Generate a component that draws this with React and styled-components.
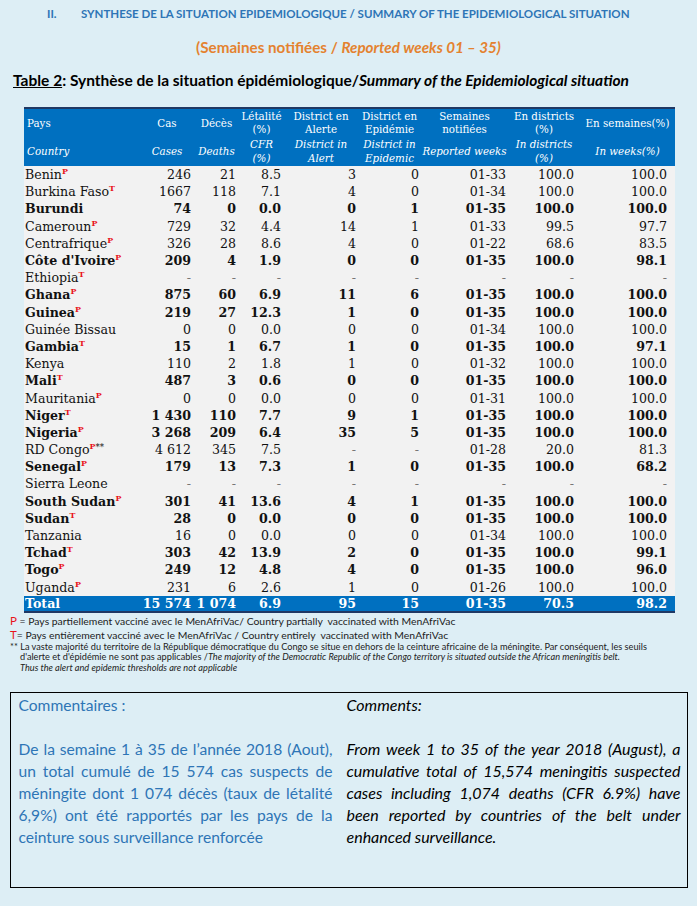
import React from 'react';
import styled, { createGlobalStyle } from 'styled-components';

const GlobalStyle = createGlobalStyle`
  body {
    margin: 0;
    background-color: #ddeef5;
    font-family: Lato, "Liberation Sans", sans-serif;
  }
`;

const columns = [
  { width: 116, pad: 0, align: 'left' },
  { width: 54, pad: 3 },
  { width: 45, pad: 3 },
  { width: 45, pad: 3 },
  { width: 74, pad: 2 },
  { width: 63, pad: 2 },
  { width: 87, pad: 2 },
  { width: 72, pad: 6 },
  { width: 95, pad: 8 },
];

const headers = [
  { fr: 'Pays', en: 'Country', align: 'left' },
  { fr: 'Cas', en: 'Cases' },
  { fr: 'Décès', en: 'Deaths' },
  { fr: <>Létalité<br />(%)</>, en: <>CFR<br />(%)</> },
  { fr: <>District en<br />Alerte</>, en: <>District in<br />Alert</> },
  { fr: <>District en<br />Epidémie</>, en: <>District in<br />Epidemic</> },
  { fr: <>Semaines<br />notifiées</>, en: 'Reported weeks' },
  { fr: <>En districts<br />(%)</>, en: <>In districts<br />(%)</> },
  { fr: 'En semaines(%)', en: 'In weeks(%)' },
];

const D = '-';
const rows = [
  ['Benin', 'P', false, '246', '21', '8.5', '3', '0', '01-33', '100.0', '100.0'],
  ['Burkina Faso', 'T', false, '1667', '118', '7.1', '4', '0', '01-34', '100.0', '100.0'],
  ['Burundi', '', true, '74', '0', '0.0', '0', '1', '01-35', '100.0', '100.0'],
  ['Cameroun', 'P', false, '729', '32', '4.4', '14', '1', '01-33', '99.5', '97.7'],
  ['Centrafrique', 'P', false, '326', '28', '8.6', '4', '0', '01-22', '68.6', '83.5'],
  ["Côte d'Ivoire", 'P', true, '209', '4', '1.9', '0', '0', '01-35', '100.0', '98.1'],
  ['Ethiopia', 'T', false, D, D, D, D, D, D, D, D],
  ['Ghana', 'P', true, '875', '60', '6.9', '11', '6', '01-35', '100.0', '100.0'],
  ['Guinea', 'P', true, '219', '27', '12.3', '1', '0', '01-35', '100.0', '100.0'],
  ['Guinée Bissau', '', false, '0', '0', '0.0', '0', '0', '01-34', '100.0', '100.0'],
  ['Gambia', 'T', true, '15', '1', '6.7', '1', '0', '01-35', '100.0', '97.1'],
  ['Kenya', '', false, '110', '2', '1.8', '1', '0', '01-32', '100.0', '100.0'],
  ['Mali', 'T', true, '487', '3', '0.6', '0', '0', '01-35', '100.0', '100.0'],
  ['Mauritania', 'P', false, '0', '0', '0.0', '0', '0', '01-31', '100.0', '100.0'],
  ['Niger', 'T', true, '1\u00a0430', '110', '7.7', '9', '1', '01-35', '100.0', '100.0'],
  ['Nigeria', 'P', true, '3\u00a0268', '209', '6.4', '35', '5', '01-35', '100.0', '100.0'],
  ['RD Congo', 'P', false, '4\u00a0612', '345', '7.5', D, D, '01-28', '20.0', '81.3', '**'],
  ['Senegal', 'P', true, '179', '13', '7.3', '1', '0', '01-35', '100.0', '68.2'],
  ['Sierra Leone', '', false, D, D, D, D, D, D, D, D],
  ['South Sudan', 'P', true, '301', '41', '13.6', '4', '1', '01-35', '100.0', '100.0'],
  ['Sudan', 'T', true, '28', '0', '0.0', '0', '0', '01-35', '100.0', '100.0'],
  ['Tanzania', '', false, '16', '0', '0.0', '0', '0', '01-34', '100.0', '100.0'],
  ['Tchad', 'T', true, '303', '42', '13.9', '2', '0', '01-35', '100.0', '99.1'],
  ['Togo', 'P', true, '249', '12', '4.8', '4', '0', '01-35', '100.0', '96.0'],
  ['Uganda', 'P', false, '231', '6', '2.6', '1', '0', '01-26', '100.0', '100.0'],
];

const totals = ['15\u00a0574', '1\u00a0074', '6.9', '95', '15', '01-35', '70.5', '98.2'];

export default function App() {
  return (
    <>
      <GlobalStyle />
      <Page>
        <SectionTitle>
          <SectionNumber>II.</SectionNumber>
          SYNTHESE DE LA SITUATION EPIDEMIOLOGIQUE / SUMMARY OF THE EPIDEMIOLOGICAL SITUATION
        </SectionTitle>

        <WeeksLine>
          (Semaines notifiées / <em>Reported weeks 01 – 35)</em>
        </WeeksLine>

        <Caption>
          <u>Table 2</u>: Synthèse de la situation épidémiologique/<em>Summary of the Epidemiological situation</em>
        </Caption>

        <DataTable>
          <colgroup>
            {columns.map((c, i) => (
              <col key={i} style={{ width: c.width }} />
            ))}
          </colgroup>
          <thead>
            <tr>
              {headers.map((h, i) => (
                <HeadCell key={i} $align={h.align}>
                  <HeadHalf $align={h.align}>{h.fr}</HeadHalf>
                  <HeadHalf $align={h.align} $italic>{h.en}</HeadHalf>
                </HeadCell>
              ))}
            </tr>
          </thead>
          <tbody>
            {rows.map((r) => {
              const [name, mark, bold, ...rest] = r;
              const values = rest.slice(0, 8);
              const extra = rest[8];
              return (
                <BodyRow key={name} $bold={bold}>
                  <NameCell>
                    {name}
                    {mark && <Mark>{mark}</Mark>}
                    {extra && <Stars>{extra}</Stars>}
                  </NameCell>
                  {values.map((v, i) => (
                    <NumCell key={i} $pad={columns[i + 1].pad} $dash={v === D}>
                      {v}
                    </NumCell>
                  ))}
                </BodyRow>
              );
            })}
            <TotalRow>
              <NameCell>Total</NameCell>
              {totals.map((v, i) => (
                <NumCell key={i} $pad={columns[i + 1].pad}>
                  {v}
                </NumCell>
              ))}
            </TotalRow>
          </tbody>
        </DataTable>

        <Notes>
          <NoteLine>
            <NoteKey>P</NoteKey> = Pays partiellement vacciné avec le MenAfriVac/ Country partially&nbsp; vaccinated with MenAfriVac
          </NoteLine>
          <NoteLine>
            <NoteKey>T</NoteKey>= Pays entièrement vacciné avec le MenAfriVac / Country entirely&nbsp; vaccinated with MenAfriVac
          </NoteLine>
          <SmallNote>
            ** La vaste majorité du territoire de la République démocratique du Congo se situe en dehors de la ceinture africaine de la méningite. Par conséquent, les seuils
          </SmallNote>
          <SmallNote $indent>
            d'alerte et d'épidémie ne sont pas applicables /<em>The majority of the Democratic Republic of the Congo territory is situated outside the African meningitis belt.</em>
          </SmallNote>
          <SmallNote $indent>
            <em>Thus the alert and epidemic thresholds are not applicable</em>
          </SmallNote>
        </Notes>

        <CommentBox>
          <CommentColumn $lang="fr">
            <CommentTitle>Commentaires :</CommentTitle>
            <CommentText>
              De la semaine 1 à 35 de l’année 2018 (Aout), un total cumulé de 15 574 cas suspects de méningite dont 1 074 décès (taux de létalité 6,9%) ont été rapportés par les pays de la ceinture sous surveillance renforcée
            </CommentText>
          </CommentColumn>
          <CommentColumn $lang="en">
            <CommentTitle>Comments:</CommentTitle>
            <CommentText>
              From week 1 to 35 of the year 2018 (August), a cumulative total of 15,574 meningitis suspected cases including 1,074 deaths (CFR 6.9%) have been reported by countries of the belt under enhanced surveillance.
            </CommentText>
          </CommentColumn>
        </CommentBox>
      </Page>
    </>
  );
}

const Page = styled.div`
  width: 697px;
  min-height: 906px;
  padding-top: 5px;
  box-sizing: border-box;
`;

const SectionTitle = styled.h1`
  margin: 0;
  padding-left: 47px;
  height: 18px;
  line-height: 18px;
  font-size: 11.5px;
  font-weight: 700;
  color: #2e75b6;
  display: flex;
  white-space: nowrap;
`;

const SectionNumber = styled.span`
  width: 34px;
`;

const WeeksLine = styled.h2`
  margin: 14px 0 0;
  height: 20px;
  line-height: 20px;
  text-align: center;
  font-size: 15.2px;
  font-weight: 700;
  color: #e4822f;

  em {
    font-style: italic;
  }
`;

const Caption = styled.div`
  margin: 13px 0 0 13px;
  height: 20px;
  line-height: 20px;
  font-size: 15.5px;
  font-weight: 700;
  color: #000;
  white-space: nowrap;
`;

const DataTable = styled.table`
  margin: 17px 0 0 24px;
  width: 651px;
  table-layout: fixed;
  border-collapse: collapse;
  border-top: 2px solid #1f3864;
  font-family: "DejaVu Serif", "Liberation Serif", serif;
`;

const HeadCell = styled.th`
  padding: 0 0 0 ${({ $align }) => ($align === 'left' ? '3px' : '0')};
  background-color: #0070c0;
  color: #fff;
  font-weight: 400;
  font-size: 10.3px;
  text-align: ${({ $align }) => $align || 'center'};
  vertical-align: top;
`;

const HeadHalf = styled.div`
  height: 28.5px;
  display: flex;
  flex-direction: column;
  justify-content: center;
  align-items: ${({ $align }) => ($align === 'left' ? 'flex-start' : 'center')};
  line-height: 13.5px;
  font-style: ${({ $italic }) => ($italic ? 'italic' : 'normal')};
  white-space: nowrap;
`;

const BodyRow = styled.tr`
  height: 17.2px;
  background-color: #f2f2f2;
  color: #111;
  font-size: 12.6px;
  font-weight: ${({ $bold }) => ($bold ? 700 : 400)};
`;

const TotalRow = styled.tr`
  height: 16px;
  background-color: #0070c0;
  color: #fff;
  font-size: 12.6px;
  font-weight: 700;
  border-bottom: 2px solid #1f3864;
`;

const NameCell = styled.td`
  padding: 0 0 0 1px;
  line-height: 15px;
  white-space: nowrap;
  overflow: visible;
`;

const NumCell = styled.td`
  padding: 0 ${({ $pad }) => $pad}px 0 0;
  line-height: 15px;
  text-align: right;
  white-space: nowrap;
  color: ${({ $dash }) => ($dash ? '#777' : 'inherit')};
`;

const Mark = styled.sup`
  color: #e8141b;
  font-size: 8px;
  line-height: 0;
  vertical-align: 5px;
  font-weight: 700;
`;

const Stars = styled.sup`
  font-size: 8.5px;
  line-height: 0;
  vertical-align: 4px;
  font-weight: 400;
`;

const Notes = styled.div`
  margin: 1px 0 0 10px;
  color: #222;
`;

const NoteLine = styled.div`
  height: 14px;
  line-height: 14px;
  font-size: 10.4px;
  white-space: nowrap;
`;

const NoteKey = styled.span`
  color: #e8141b;
  font-size: 11.5px;
`;

const SmallNote = styled.div`
  height: 10.5px;
  line-height: 10.5px;
  font-size: 9.2px;
  white-space: nowrap;
  padding-left: ${({ $indent }) => ($indent ? '10px' : '0')};
`;

const CommentBox = styled.div`
  margin: 19px 0 0 10px;
  width: 678px;
  height: 196px;
  box-sizing: border-box;
  border: 1.5px solid #000;
  padding: 1px 0 0 7.5px;
  display: grid;
  grid-template-columns: 314px 334px;
  column-gap: 14px;
  font-size: 15.6px;
`;

const CommentColumn = styled.div`
  color: ${({ $lang }) => ($lang === 'fr' ? '#2e75b6' : '#000')};
  font-style: ${({ $lang }) => ($lang === 'en' ? 'italic' : 'normal')};
  font-size: ${({ $lang }) => ($lang === 'en' ? '16px' : 'inherit')};
`;

const CommentTitle = styled.div`
  line-height: 22px;
`;

const CommentText = styled.p`
  margin: 22px 0 0;
  line-height: 22px;
  text-align: justify;
`;
